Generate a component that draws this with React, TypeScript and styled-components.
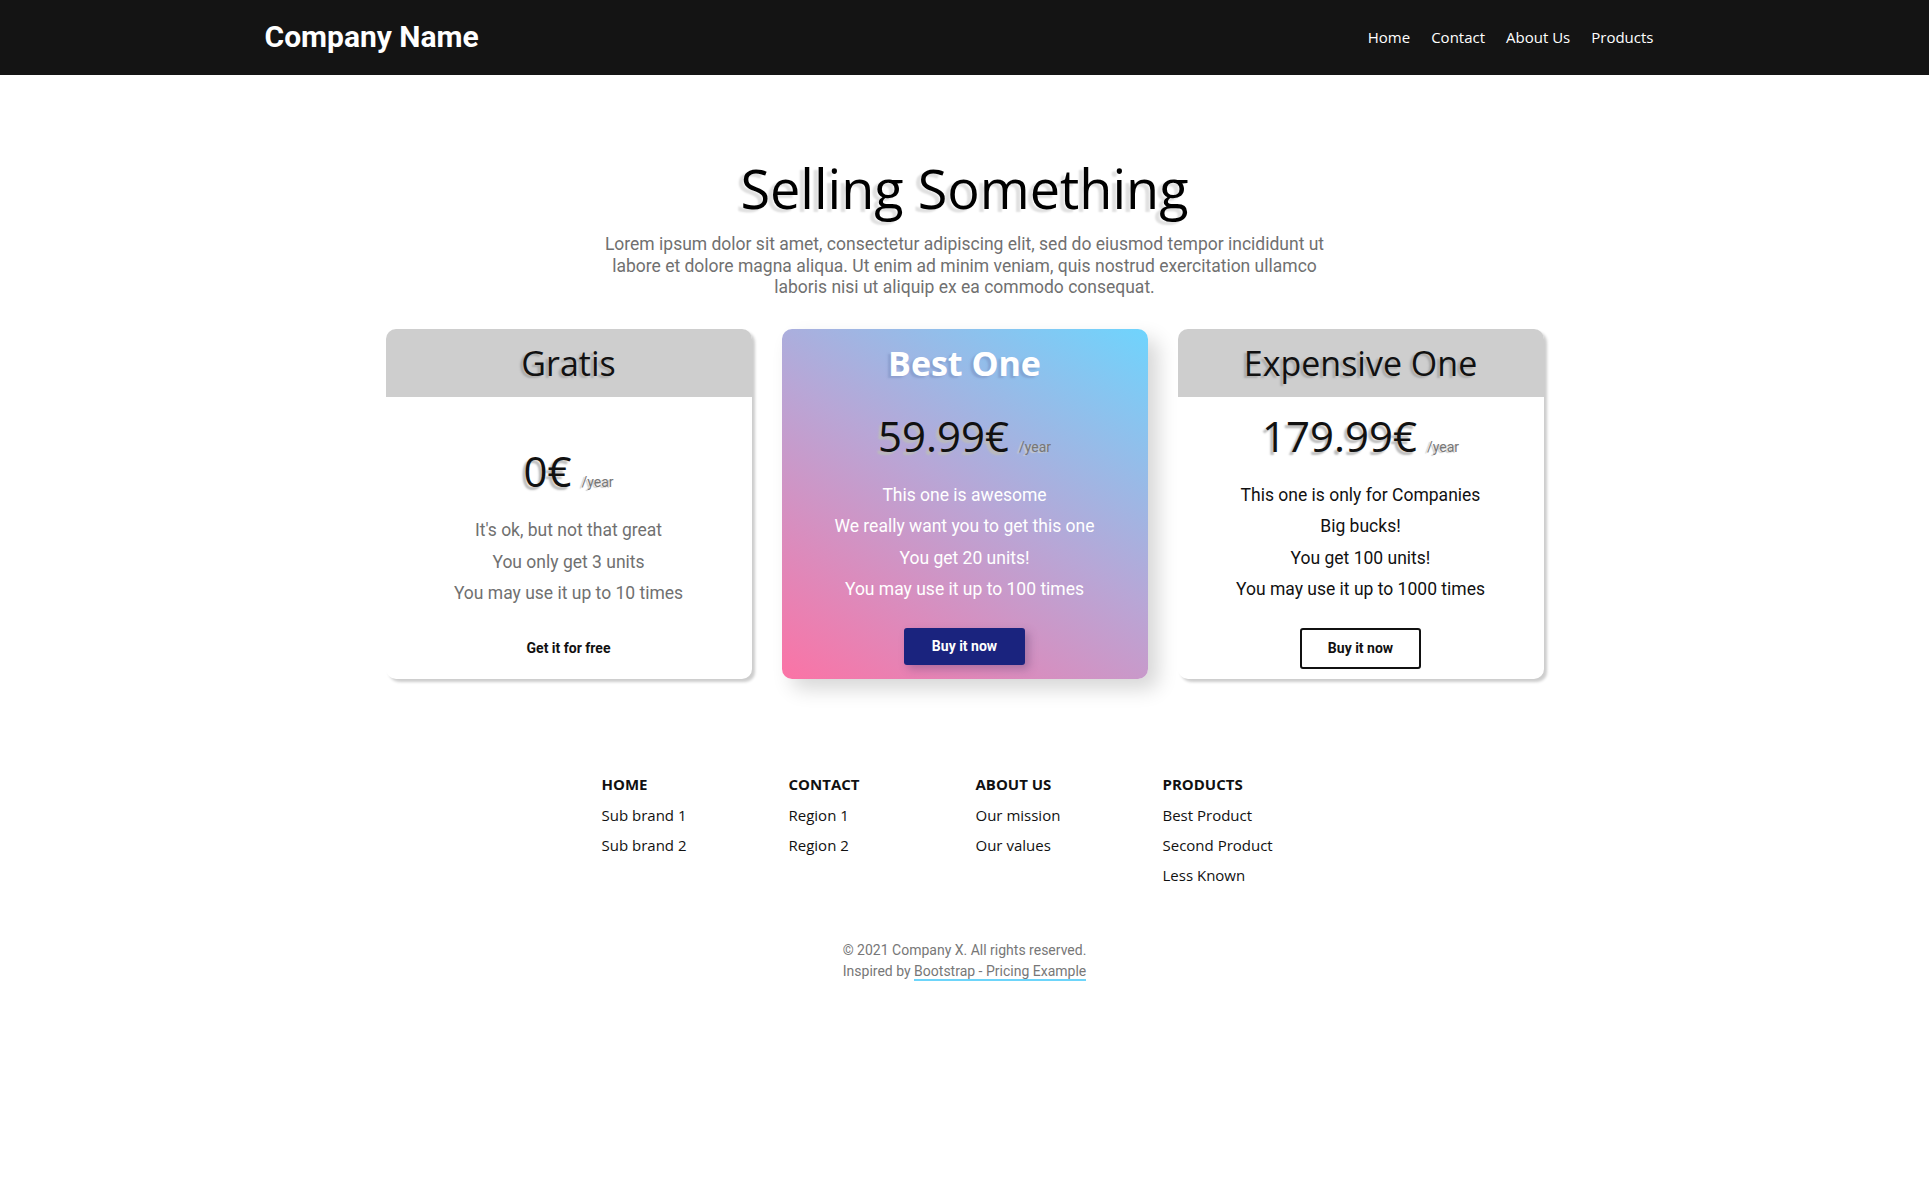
import React from "react";
import styled, { createGlobalStyle } from "styled-components";

const GlobalStyle = createGlobalStyle`
  * {
    box-sizing: border-box;
  }

  body {
    margin: 0;
    background: #fff;
    font-family: Roboto, "Liberation Sans", sans-serif;
    color: #111;
  }
`;

const Header = styled.header`
  background: #141414;
  height: 75px;
`;

const HeaderInner = styled.div`
  max-width: 1400px;
  height: 100%;
  margin: 0 auto;
  padding-bottom: 2px;
  display: flex;
  align-items: center;
  justify-content: space-between;
`;

const Brand = styled.a`
  font-family: Roboto, sans-serif;
  font-weight: 700;
  font-size: 30px;
  color: #fff;
  text-decoration: none;
`;

const Nav = styled.nav`
  display: flex;
  gap: 21px;
  padding-right: 11px;
`;

const NavLink = styled.a`
  font-family: "Open Sans", sans-serif;
  font-size: 15px;
  color: #fff;
  text-decoration: none;
`;

const Main = styled.main`
  display: flex;
  flex-direction: column;
  align-items: center;
  padding-top: 86px;
`;

const Title = styled.h1`
  margin: 0;
  font-family: "Open Sans", sans-serif;
  font-weight: 400;
  font-size: 54px;
  line-height: 1;
  color: #000;
  text-shadow: -5px 3px 2px #e0e0e0;
`;

const Lead = styled.p`
  max-width: 740px;
  margin: 19px 0 0;
  font-size: 17.5px;
  line-height: 21.5px;
  text-align: center;
  color: #707070;
`;

const Cards = styled.div`
  display: grid;
  grid-template-columns: repeat(3, 366px);
  gap: 30px;
  margin-top: 30px;
`;

const Card = styled.div<{ $featured?: boolean }>`
  height: 350px;
  border-radius: 10px;
  overflow: hidden;
  display: flex;
  flex-direction: column;
  background: ${({ $featured }) =>
    $featured ? "linear-gradient(32deg, #fb73a5 0%, #b8a6d6 52%, #6fd4fd 100%)" : "#fff"};
  box-shadow: ${({ $featured }) =>
    $featured ? "10px 10px 20px rgba(0, 0, 0, 0.16)" : "3px 3px 3px rgba(0, 0, 0, 0.2)"};
`;

const CardHead = styled.div<{ $featured?: boolean }>`
  height: 68px;
  flex-shrink: 0;
  display: flex;
  align-items: center;
  justify-content: center;
  background: ${({ $featured }) => ($featured ? "transparent" : "#cecece")};
`;

const CardTitle = styled.h2<{ $featured?: boolean }>`
  margin: 0;
  font-family: "Open Sans", sans-serif;
  font-size: 34px;
  font-weight: ${({ $featured }) => ($featured ? 700 : 400)};
  color: ${({ $featured }) => ($featured ? "#fff" : "#111")};
  text-shadow: ${({ $featured }) =>
    $featured ? "-3px 2px 2px rgba(120, 140, 190, 0.5)" : "-3px 2px 2px #aaa"};
`;

const CardBody = styled.div`
  flex: 1;
  display: flex;
  flex-direction: column;
  align-items: center;
  justify-content: flex-end;
  padding-bottom: 10px;
`;

const Price = styled.div`
  display: flex;
  align-items: baseline;
  gap: 10px;
  margin-bottom: 16px;
`;

const Amount = styled.span`
  font-family: "Open Sans", sans-serif;
  font-size: 42px;
  color: #111;
  text-shadow: -3px 3px 2px #bbb;
`;

const Period = styled.span`
  font-size: 14px;
  color: #777;
  text-shadow: -2px 1px 1px #ccc;
`;

const Features = styled.ul<{ $tone: string; $gap: number }>`
  list-style: none;
  margin: 0 0 ${({ $gap }) => $gap}px;
  padding: 0;
  text-align: center;
  font-size: 17.5px;
  line-height: 31.4px;
  color: ${({ $tone }) => $tone};
`;

const Button = styled.button<{ $variant: "ghost" | "solid" | "outline" }>`
  width: 121px;
  height: ${({ $variant }) => ($variant === "solid" ? "37px" : "41px")};
  border-radius: 3px;
  font-family: Roboto, sans-serif;
  font-weight: 700;
  font-size: 14px;
  cursor: pointer;
  margin-bottom: ${({ $variant }) => ($variant === "solid" ? "4px" : "0")};
  border: 2px solid
    ${({ $variant }) => ($variant === "outline" ? "#111" : "transparent")};
  background: ${({ $variant }) => ($variant === "solid" ? "#1a237e" : "#fff")};
  color: ${({ $variant }) => ($variant === "solid" ? "#fff" : "#111")};
  box-shadow: ${({ $variant }) =>
    $variant === "solid" ? "4px 4px 8px rgba(80, 60, 110, 0.35)" : "none"};
`;

const Footer = styled.footer`
  display: flex;
  flex-direction: column;
  align-items: center;
  margin-top: 95px;
`;

const FooterCols = styled.div`
  display: grid;
  grid-template-columns: repeat(4, 187px);
  padding-left: 22px;
`;

const FooterCol = styled.div`
  display: flex;
  flex-direction: column;
  gap: 10px;
  font-family: "Open Sans", sans-serif;
  font-size: 15px;
`;

const FooterHeading = styled.h3`
  margin: 0 0 1px;
  font-size: 15px;
  font-weight: 700;
  text-transform: uppercase;
  color: #111;
`;

const FooterLink = styled.a`
  color: #111;
  text-decoration: none;
`;

const Copy = styled.div`
  margin-top: 55px;
  text-align: center;
  font-size: 14px;
  line-height: 21px;
  color: #777;
`;

const CopyLink = styled.a`
  color: #777;
  text-decoration: none;
  border-bottom: 2px solid #6dd5fa;
`;

type Plan = {
  name: string;
  price: string;
  features: string[];
  tone: string;
  gap: number;
  action: string;
  variant: "ghost" | "solid" | "outline";
  featured?: boolean;
};

const plans: Plan[] = [
  {
    name: "Gratis",
    price: "0€",
    features: ["It's ok, but not that great", "You only get 3 units", "You may use it up to 10 times"],
    tone: "#707070",
    gap: 18,
    action: "Get it for free",
    variant: "ghost",
  },
  {
    name: "Best One",
    price: "59.99€",
    features: [
      "This one is awesome",
      "We really want you to get this one",
      "You get 20 units!",
      "You may use it up to 100 times",
    ],
    tone: "#fff",
    gap: 22,
    action: "Buy it now",
    variant: "solid",
    featured: true,
  },
  {
    name: "Expensive One",
    price: "179.99€",
    features: ["This one is only for Companies", "Big bucks!", "You get 100 units!", "You may use it up to 1000 times"],
    tone: "#111",
    gap: 22,
    action: "Buy it now",
    variant: "outline",
  },
];

const footerCols = [
  { title: "Home", links: ["Sub brand 1", "Sub brand 2"] },
  { title: "Contact", links: ["Region 1", "Region 2"] },
  { title: "About Us", links: ["Our mission", "Our values"] },
  { title: "Products", links: ["Best Product", "Second Product", "Less Known"] },
];

export default function App() {
  return (
    <>
      <GlobalStyle />
      <Header>
        <HeaderInner>
          <Brand href="#">Company Name</Brand>
          <Nav>
            <NavLink href="#">Home</NavLink>
            <NavLink href="#">Contact</NavLink>
            <NavLink href="#">About Us</NavLink>
            <NavLink href="#">Products</NavLink>
          </Nav>
        </HeaderInner>
      </Header>
      <Main>
        <Title>Selling Something</Title>
        <Lead>
          Lorem ipsum dolor sit amet, consectetur adipiscing elit, sed do eiusmod tempor incididunt ut labore et
          dolore magna aliqua. Ut enim ad minim veniam, quis nostrud exercitation ullamco laboris nisi ut aliquip ex
          ea commodo consequat.
        </Lead>
        <Cards>
          {plans.map((plan) => (
            <Card key={plan.name} $featured={plan.featured}>
              <CardHead $featured={plan.featured}>
                <CardTitle $featured={plan.featured}>{plan.name}</CardTitle>
              </CardHead>
              <CardBody>
                <Price>
                  <Amount>{plan.price}</Amount>
                  <Period>/year</Period>
                </Price>
                <Features $tone={plan.tone} $gap={plan.gap}>
                  {plan.features.map((f) => (
                    <li key={f}>{f}</li>
                  ))}
                </Features>
                <Button $variant={plan.variant}>{plan.action}</Button>
              </CardBody>
            </Card>
          ))}
        </Cards>
        <Footer>
          <FooterCols>
            {footerCols.map((col) => (
              <FooterCol key={col.title}>
                <FooterHeading>{col.title}</FooterHeading>
                {col.links.map((l) => (
                  <FooterLink key={l} href="#">
                    {l}
                  </FooterLink>
                ))}
              </FooterCol>
            ))}
          </FooterCols>
          <Copy>
            © 2021 Company X. All rights reserved.
            <br />
            Inspired by <CopyLink href="#">Bootstrap - Pricing Example</CopyLink>
          </Copy>
        </Footer>
      </Main>
    </>
  );
}
